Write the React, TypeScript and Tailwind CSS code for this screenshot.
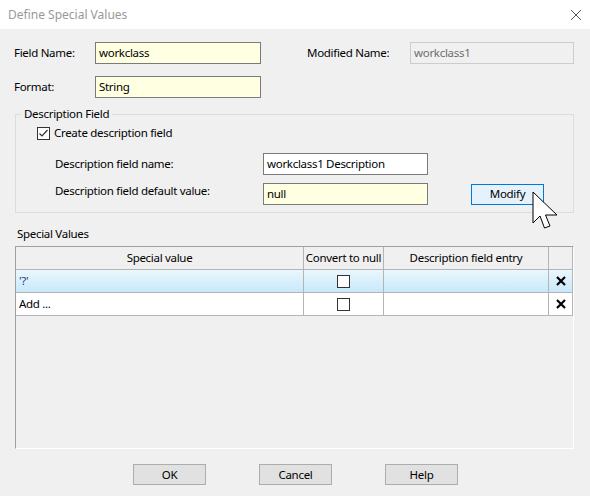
import React from 'react';

const font = { fontFamily: '"Noto Sans", "Segoe UI", sans-serif' };

function TextBox({ value, width, tone = 'yellow' }: { value: string; width: string; tone?: 'yellow' | 'white' | 'disabled' }) {
  const tones = {
    yellow: 'bg-[#ffffe1] border-[#7a7a7a] text-black',
    white: 'bg-white border-[#7a7a7a] text-black',
    disabled: 'bg-[#f0f0f0] border-[#cccccc] text-[#6d6d6d]',
  };
  return (
    <div className={`${width} h-[22px] border flex items-center pl-[3px] ${tones[tone]}`}>
      {value}
    </div>
  );
}

function Check({ checked = false }: { checked?: boolean }) {
  return (
    <div className="w-[13px] h-[13px] border border-[#333333] bg-white flex items-center justify-center">
      {checked && (
        <svg width="11" height="11" viewBox="0 0 11 11">
          <path d="M1.5 5.5 L4 8 L9.5 2" fill="none" stroke="#333" strokeWidth="1.2" />
        </svg>
      )}
    </div>
  );
}

function DeleteX() {
  return (
    <svg width="10" height="10" viewBox="0 0 10 10">
      <path d="M1 1 L9 9 M9 1 L1 9" stroke="#000" strokeWidth="2.2" />
    </svg>
  );
}

function Button({ label, className = '' }: { label: string; className?: string }) {
  return (
    <div className={`w-[73px] h-[21px] bg-[#e1e1e1] border border-[#adadad] flex items-center justify-center ${className}`}>
      {label}
    </div>
  );
}

const cols = ['w-[288px]', 'w-[80px]', 'w-[165px]', 'w-[24px]'];

function GridRow({ first, blue }: { first: string; blue?: boolean }) {
  return (
    <div className={`flex h-[23px] ${blue ? 'bg-gradient-to-b from-[#ebf7fd] to-[#c6e8fa]' : 'bg-white'}`}>
      <div className={`${cols[0]} border-r border-b border-[#b4b4b4] flex items-center pl-[3px] ${blue ? 'text-[#1b3f7a]' : ''}`}>
        {first}
      </div>
      <div className={`${cols[1]} border-r border-b border-[#b4b4b4] flex items-center justify-center`}>
        <Check />
      </div>
      <div className={`${cols[2]} border-r border-b border-[#b4b4b4]`} />
      <div className={`${cols[3]} border-r border-b border-[#b4b4b4] flex items-center justify-center`}>
        <DeleteX />
      </div>
    </div>
  );
}

export default function App() {
  return (
    <div className="relative w-[590px] h-[496px] bg-[#f0f0f0] text-[11.5px] tracking-[-0.3px] text-black overflow-hidden" style={font}>
      {/* title bar */}
      <div className="h-[29px] bg-white flex items-center justify-between pl-[8px] pr-[8px]">
        <span className="text-[#999999] text-[12px] tracking-normal">Define Special Values</span>
        <svg width="12" height="12" viewBox="0 0 12 12">
          <path d="M1 1 L11 11 M11 1 L1 11" stroke="#5a5a5a" strokeWidth="1" />
        </svg>
      </div>

      <div className="pl-[14px]">
        <div className="flex items-center mt-[13px]">
          <span className="w-[81px]">Field Name:</span>
          <TextBox value="workclass" width="w-[166px]" />
          <span className="w-[103px] ml-[46px]">Modified Name:</span>
          <TextBox value="workclass1" width="w-[164px]" tone="disabled" />
        </div>
        <div className="flex items-center mt-[12px]">
          <span className="w-[81px]">Format:</span>
          <TextBox value="String" width="w-[166px]" />
        </div>

        <fieldset className="ml-[1px] mt-[8px] w-[559px] border border-[#dcdcdc] pb-[7px]">
          <legend className="ml-[5px] px-[3px] leading-[16px]">Description Field</legend>
          <div className="flex items-center pl-[21px] mt-[3px] h-[16px]">
            <Check checked />
            <span className="ml-[4px]">Create description field</span>
          </div>
          <div className="flex items-center pl-[39px] mt-[12px]">
            <span className="w-[208px]">Description field name:</span>
            <TextBox value="workclass1 Description" width="w-[165px]" tone="white" />
          </div>
          <div className="flex items-center pl-[39px] mt-[8px]">
            <span className="w-[208px] self-start leading-[16px]">Description field default value:</span>
            <TextBox value="null" width="w-[165px]" />
            <div className="ml-[43px] w-[73px] h-[21px] bg-[#e5f1fb] border border-[#0078d7] flex items-center justify-center">
              Modify
            </div>
          </div>
        </fieldset>

        <div className="ml-[3px] mt-[13px] leading-[16px]">Special Values</div>

        <div className="ml-[1px] mt-[4px] w-[559px] h-[203px] border-l border-t border-[#a0a0a0] border-r-white border-b-white border-r border-b">
          <div className="flex h-[23px] bg-[#f0f0f0]">
            {['Special value', 'Convert to null', 'Description field entry', ''].map((h, i) => (
              <div key={i} className={`${cols[i]} border-r border-b border-[#b4b4b4] flex items-center justify-center whitespace-nowrap`}>
                {h}
              </div>
            ))}
          </div>
          <GridRow first="'?'" blue />
          <GridRow first="Add ..." />
        </div>

        <div className="flex mt-[15px]">
          <Button label="OK" className="ml-[119px]" />
          <Button label="Cancel" className="ml-[53px]" />
          <Button label="Help" className="ml-[53px]" />
        </div>
      </div>

      {/* mouse pointer over Modify */}
      <svg className="absolute left-[532px] top-[191px]" width="27" height="39" viewBox="0 0 27 39">
        <path d="M1 1 L1 32 L8 25 L12.5 37 L18 35 L13.5 24 L25 24 Z" fill="#fff" stroke="#000" strokeWidth="1" strokeLinejoin="miter" />
      </svg>
    </div>
  );
}
